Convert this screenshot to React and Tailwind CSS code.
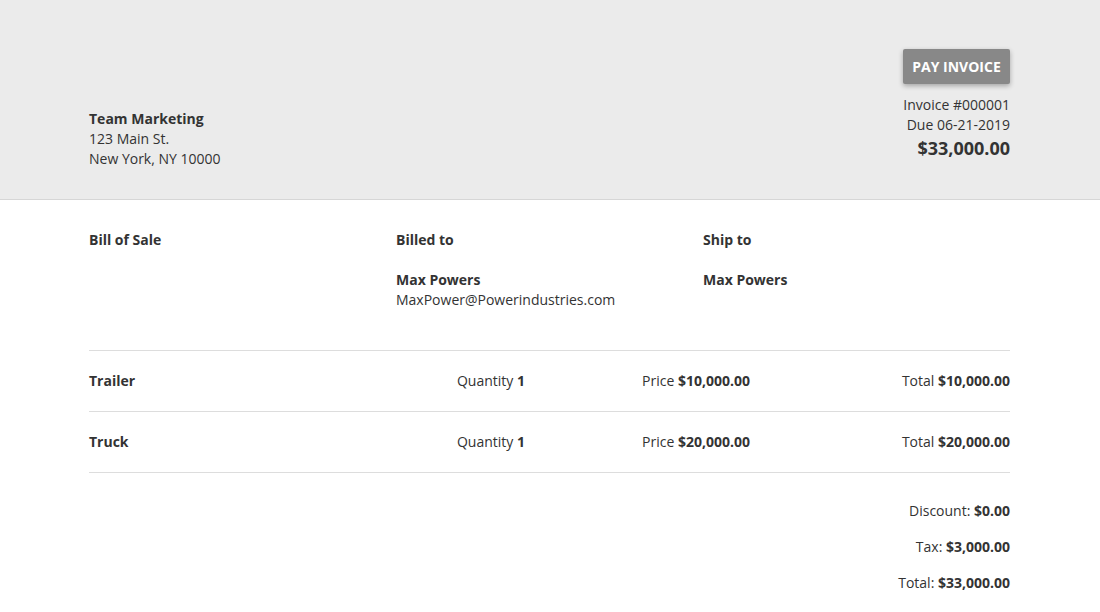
const items = [
  { name: "Trailer", qty: 1, price: "$10,000.00", total: "$10,000.00" },
  { name: "Truck", qty: 1, price: "$20,000.00", total: "$20,000.00" },
];

export default function App() {
  return (
    <div className="min-h-screen bg-white text-[14px] leading-5 text-[#333]" style={{ fontFamily: '"Open Sans", sans-serif' }}>
      {/* Header */}
      <div className="bg-[#ebebeb] border-b border-[#d6d6d6] pl-[89px] pr-[90px]">
        <div className="pt-[49px] pb-[30px] flex justify-between items-start">
          <div className="mt-[60px]">
            <p className="font-bold">Team Marketing</p>
            <p>123 Main St.</p>
            <p>New York, NY 10000</p>
          </div>
          <div className="flex flex-col items-end text-right">
            <button className="h-[35px] w-[107px] bg-[#888888] text-white font-bold uppercase rounded-[2px] shadow-[0_2px_5px_rgba(0,0,0,0.3)]">
              Pay Invoice
            </button>
            <p className="mt-[11px]">Invoice #000001</p>
            <p>Due 06-21-2019</p>
            <p className="text-lg font-bold leading-[26px]">$33,000.00</p>
          </div>
        </div>
      </div>

      <div className="pl-[89px] pr-[90px]">
        {/* Parties */}
        <div className="grid grid-cols-3 pt-[30px] pb-[40px] border-b border-[#dddddd]">
          <div>
            <p className="font-bold">Bill of Sale</p>
          </div>
          <div>
            <p className="font-bold">Billed to</p>
            <p className="font-bold mt-5">Max Powers</p>
            <p>MaxPower@Powerindustries.com</p>
          </div>
          <div>
            <p className="font-bold">Ship to</p>
            <p className="font-bold mt-5">Max Powers</p>
          </div>
        </div>

        {/* Line items */}
        {items.map((item) => (
          <div key={item.name} className="flex py-5 border-b border-[#dddddd]">
            <div className="flex-1 font-bold">{item.name}</div>
            <div className="w-[200px] text-right">
              Quantity <span className="font-bold">{item.qty}</span>
            </div>
            <div className="w-[225px] text-right">
              Price <span className="font-bold">{item.price}</span>
            </div>
            <div className="w-[260px] text-right">
              Total <span className="font-bold">{item.total}</span>
            </div>
          </div>
        ))}

        {/* Totals */}
        <div className="pt-7 pb-5 flex flex-col items-end gap-4">
          <p>
            Discount: <span className="font-bold">$0.00</span>
          </p>
          <p>
            Tax: <span className="font-bold">$3,000.00</span>
          </p>
          <p>
            Total: <span className="font-bold">$33,000.00</span>
          </p>
        </div>
      </div>
    </div>
  );
}
